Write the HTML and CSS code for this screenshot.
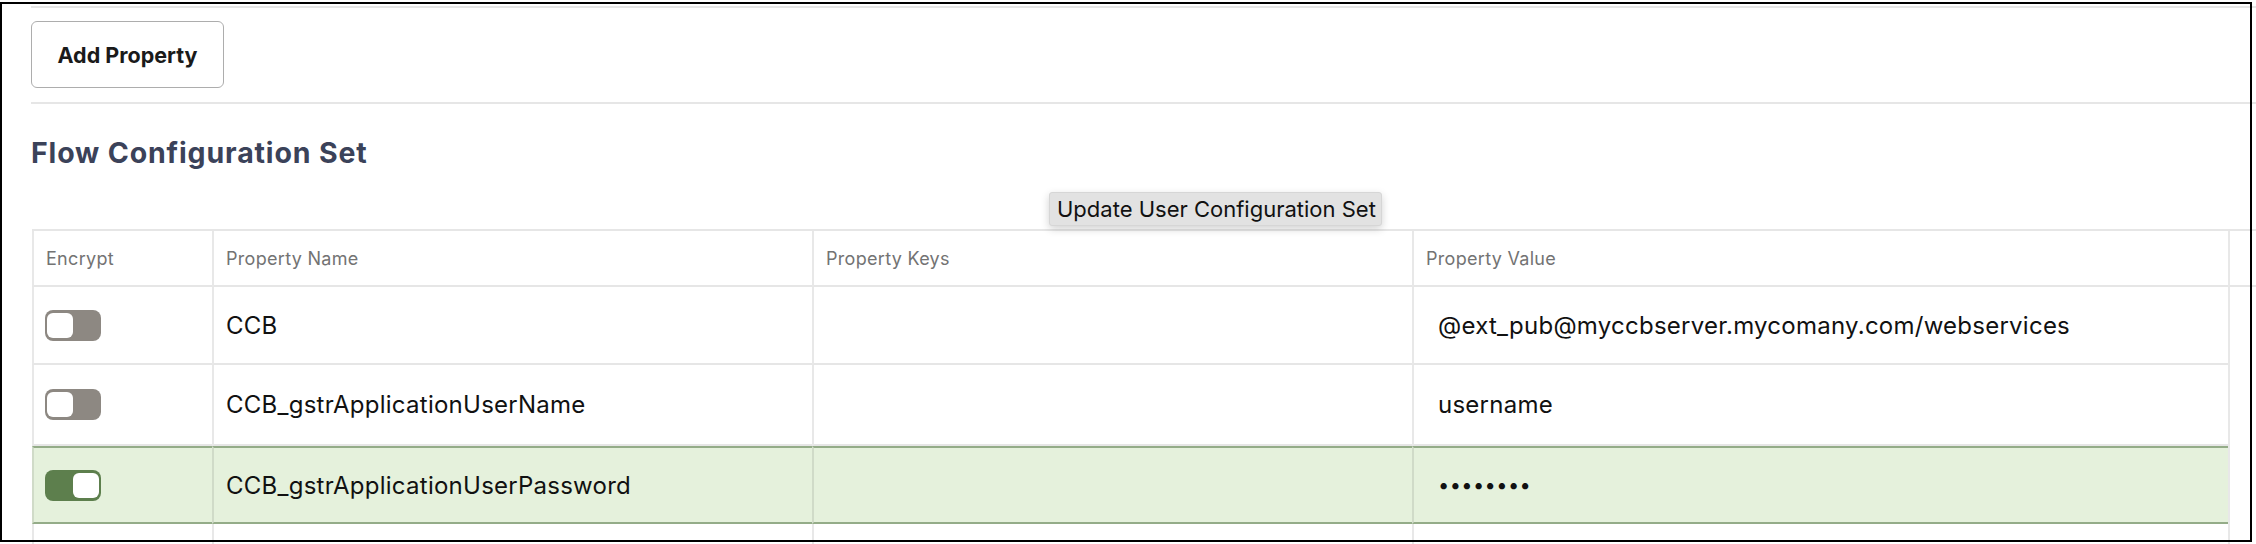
FILE: index.html
```html
<!DOCTYPE html>
<html lang="en">
<head>
<meta charset="utf-8">
<title>Flow Configuration Set</title>
<link rel="stylesheet" href="styles.css">
</head>
<body>
<div class="frame"></div>
<div class="page">
  <div class="toolbar">
    <button class="btn" type="button">Add Property</button>
  </div>
  <h2 class="title">Flow Configuration Set</h2>
  <div class="table-wrap">
    <div class="tooltip">Update User Configuration Set</div>
    <div class="table">
      <div class="row head">
        <div class="cell c1">Encrypt</div>
        <div class="cell c2">Property Name</div>
        <div class="cell c3">Property Keys</div>
        <div class="cell c4">Property Value</div>
        <div class="cell c5"></div>
      </div>
      <div class="row r1">
        <div class="cell c1"><span class="toggle"><span class="knob"></span></span></div>
        <div class="cell c2">CCB</div>
        <div class="cell c3"></div>
        <div class="cell c4 val">@ext_pub@myccbserver.mycomany.com/webservices</div>
        <div class="cell c5"></div>
      </div>
      <div class="row r2">
        <div class="cell c1"><span class="toggle"><span class="knob"></span></span></div>
        <div class="cell c2">CCB_gstrApplicationUserName</div>
        <div class="cell c3"></div>
        <div class="cell c4 val">username</div>
        <div class="cell c5"></div>
      </div>
      <div class="row r3 selected">
        <div class="cell c1"><span class="toggle on"><span class="knob"></span></span></div>
        <div class="cell c2">CCB_gstrApplicationUserPassword</div>
        <div class="cell c3"></div>
        <div class="cell c4 val"><span class="dots">••••••••</span></div>
        <div class="cell c5"></div>
      </div>
      <div class="row r4">
        <div class="cell c1"></div>
        <div class="cell c2"></div>
        <div class="cell c3"></div>
        <div class="cell c4"></div>
        <div class="cell c5"></div>
      </div>
    </div>
  </div>
</div>
</body>
</html>
```
FILE: styles.css
```css
html, body {
  margin: 0;
  padding: 0;
  background: #ffffff;
  overflow: hidden;
}
body {
  width: 2256px;
  height: 544px;
  font-family: Inter, "Liberation Sans", sans-serif;
  color: #111111;
  position: relative;
}
.frame {
  position: absolute;
  left: 0;
  top: 2px;
  width: 2248px;
  height: 536px;
  border: 2px solid #000000;
  z-index: 10;
  pointer-events: none;
}
.page {
  padding: 6px 0 0 31px;
}
.toolbar {
  border-top: 2px solid #e6e6e6;
  border-bottom: 2px solid #e6e6e6;
  padding: 13px 0 14px;
}
.btn {
  display: block;
  box-sizing: border-box;
  width: 193px;
  height: 67px;
  border: 1.5px solid #adadad;
  border-radius: 6px;
  background: #ffffff;
  font-family: Inter, "Liberation Sans", sans-serif;
  font-weight: 700;
  font-size: 21.5px;
  color: #1a1a1a;
  padding: 0;
}
.title {
  margin: 32px 0 0;
  font-size: 28.5px;
  letter-spacing: 0.85px;
  line-height: 34px;
  font-weight: 700;
  color: #3b4259;
}
.table-wrap {
  position: relative;
  margin-top: 59px;
  margin-left: 1px;
}
.tooltip {
  position: absolute;
  left: 1017px;
  top: -37px;
  width: 333px;
  height: 34px;
  box-sizing: border-box;
  background: #e2e2e2;
  border: 1px solid #d6d6d6;
  border-radius: 3px;
  box-shadow: 0 3px 8px rgba(0, 0, 0, 0.18);
  font-size: 22px;
  line-height: 32px;
  padding-left: 7px;
  color: #111111;
  z-index: 5;
  white-space: nowrap;
}
.table {
  border-top: 2px solid #e6e6e6;
}
.row {
  display: grid;
  grid-template-columns: 180px 600px 600px 816px 1fr;
}
.cell {
  border-left: 2px solid rgba(0, 0, 0, 0.09);
  display: flex;
  align-items: center;
  box-sizing: border-box;
  font-size: 24px;
  letter-spacing: 0.25px;
  padding-left: 12px;
  white-space: nowrap;
  overflow: hidden;
}
.row > .c1,
.row > .c2,
.row > .c3,
.row > .c4 {
  border-bottom: 2px solid #e6e6e6;
}
.head .cell {
  height: 56px;
  font-size: 18px;
  letter-spacing: 0.3px;
  color: #737373;
  border-bottom: 2px solid #e6e6e6;
}
.r1 .cell { height: 78px; }
.r2 .cell { height: 81px; }
.r1 .c5, .r2 .c5, .r3 .c5, .r4 .c5 { border-bottom: none; }
.selected > .c1,
.selected > .c2,
.selected > .c3,
.selected > .c4 {
  background: #e5f1dc;
  border-top: 2px solid #94ac88;
  border-bottom: 2px solid #94ac88;
}
.r3 .cell { height: 78px; }
.r4 .cell { height: 40px; border-bottom: none; }
.row > .c1 { padding-left: 11px; }
.head > .c1 { padding-left: 12px; }
.val { padding-left: 24px; }
.toggle {
  display: flex;
  box-sizing: border-box;
  width: 56px;
  height: 31px;
  border-radius: 8px;
  background: #8d8882;
  padding: 3px 2px;
}
.knob {
  display: block;
  width: 26px;
  height: 25px;
  border-radius: 6px;
  background: #ffffff;
}
.toggle.on {
  background: #5d7f4d;
  justify-content: flex-end;
}
.dots {
  font-size: 20px;
  letter-spacing: 0.4px;
}
```
